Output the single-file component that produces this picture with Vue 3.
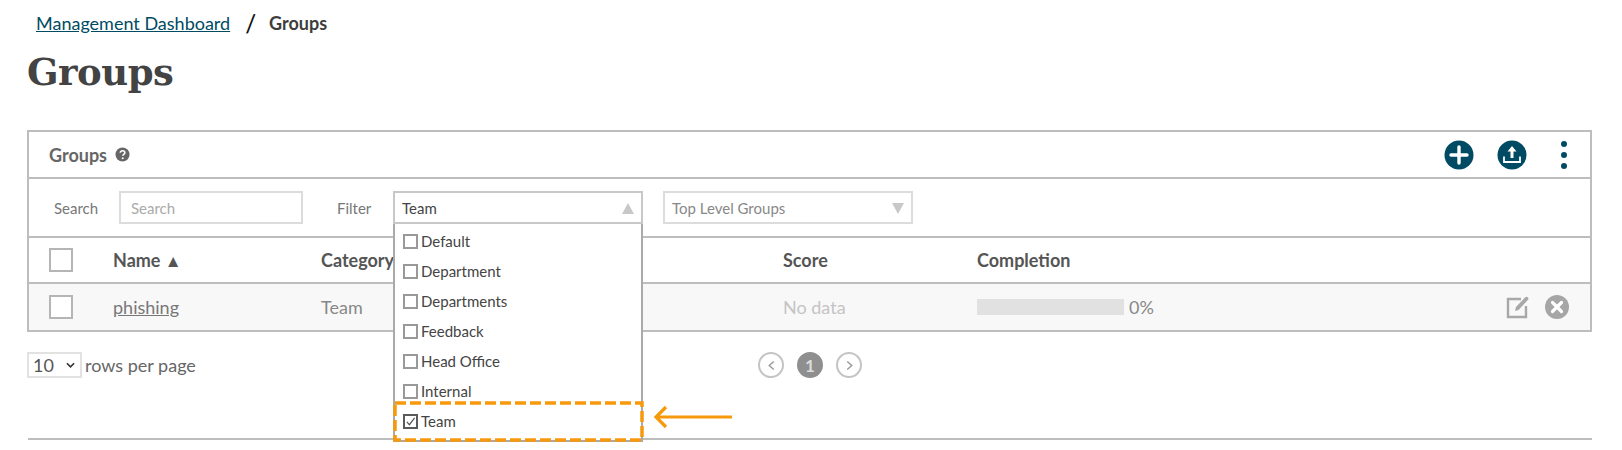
<script setup>
const options = [
  { label: 'Default', checked: false },
  { label: 'Department', checked: false },
  { label: 'Departments', checked: false },
  { label: 'Feedback', checked: false },
  { label: 'Head Office', checked: false },
  { label: 'Internal', checked: false },
  { label: 'Team', checked: true },
]
</script>

<template>
  <div class="page">
    <nav class="crumbs">
      <a class="crumb-link">Management Dashboard</a>
      <span class="crumb-sep">/</span>
      <strong class="crumb-current">Groups</strong>
    </nav>
    <h1 class="title">Groups</h1>

    <section class="panel">
      <header class="panel-head">
        <span class="panel-title">Groups</span>
        <svg class="help" viewBox="0 0 16 16" width="15" height="15">
          <circle cx="8" cy="8" r="7.5" fill="#666" />
          <path d="M5.6 6.2c0-1.4 1.1-2.2 2.5-2.2s2.4.8 2.4 2c0 1.9-2.2 1.8-2.2 3.4" fill="none" stroke="#fff" stroke-width="1.7" />
          <circle cx="8.2" cy="12" r="1.1" fill="#fff" />
        </svg>
        <div class="head-actions">
          <svg viewBox="0 0 30 30" width="30" height="30">
            <circle cx="15" cy="15" r="14.5" fill="#004b63" />
            <path d="M15 7v16M7 15h16" stroke="#fff" stroke-width="3.4" stroke-linecap="round" />
          </svg>
          <svg viewBox="0 0 30 30" width="30" height="30">
            <circle cx="15" cy="15" r="14.5" fill="#004b63" />
            <path d="M15 6l4.500 5.500h-3V18h-3v-6.500h-3z" fill="#fff" />
            <path d="M7 16.500V22h16v-5.500" fill="none" stroke="#fff" stroke-width="1.800" />
          </svg>
          <div class="dots"><i></i><i></i><i></i></div>
        </div>
      </header>

      <div class="filters">
        <label class="f-label search-label">Search</label>
        <div class="search-box">Search</div>
        <label class="f-label filter-label">Filter</label>
        <div class="select open">
          <span class="select-value">Team</span>
          <span class="tri up"></span>
          <ul class="dropdown">
            <li v-for="o in options" :key="o.label" class="option">
              <span class="opt-box" :class="{ on: o.checked }">
                <svg v-if="o.checked" viewBox="0 0 12 12" width="11" height="11">
                  <path d="M2 6.500l2.800 3L10.500 2" fill="none" stroke="#555" stroke-width="1.300" />
                </svg>
              </span>
              <span>{{ o.label }}</span>
            </li>
          </ul>
          <svg class="highlight" viewBox="0 0 251 41" width="251" height="41">
            <rect x="2" y="2" width="247" height="37" fill="none" stroke="#f7990c" stroke-width="3.500" stroke-dasharray="11 4" />
          </svg>
          <svg class="pointer" viewBox="0 0 80 24" width="80" height="24">
            <path d="M79 12H3M13 2L3 12l10 10" fill="none" stroke="#f7990c" stroke-width="3.200" />
          </svg>
        </div>
        <div class="select second">
          <span class="select-value muted">Top Level Groups</span>
          <span class="tri down"></span>
        </div>
      </div>

      <div class="row head-row">
        <div class="c-check"><span class="box"></span></div>
        <div class="c-name">Name <span class="sort">▲</span></div>
        <div class="c-cat">Category</div>
        <div class="c-score">Score</div>
        <div class="c-comp">Completion</div>
      </div>

      <div class="row data-row">
        <div class="c-check"><span class="box"></span></div>
        <div class="c-name"><a class="group-link">phishing</a></div>
        <div class="c-cat">Team</div>
        <div class="c-score nodata">No data</div>
        <div class="c-comp progress"><span class="bar"></span><span class="pct">0%</span></div>
        <div class="c-actions">
          <svg viewBox="0 0 26 26" width="26" height="26">
            <path d="M16 5H3v18h18V12" fill="none" stroke="#a8a8a8" stroke-width="2.400" />
            <path d="M10 17l1-4L20 3.500c1-1 2.200-1 3 0s.6 1.800-.2 2.600L13.500 16z" fill="#a8a8a8" />
          </svg>
          <svg viewBox="0 0 24 24" width="24" height="24">
            <circle cx="12" cy="12" r="12" fill="#a6a6a6" />
            <path d="M7.500 7.500l9 9M16.500 7.500l-9 9" stroke="#fff" stroke-width="3.200" stroke-linecap="round" />
          </svg>
        </div>
      </div>
    </section>

    <div class="foot">
      <div class="rows">
        <div class="rows-select">10
          <svg viewBox="0 0 10 6" width="9" height="6"><path d="M1 1l4 4 4-4" fill="none" stroke="#333" stroke-width="1.800" /></svg>
        </div>
        <span class="rows-text">rows per page</span>
      </div>
      <div class="pager">
        <span class="pg">
          <svg viewBox="0 0 10 12" width="9" height="11"><path d="M7.500 1.500L2.500 6l5 4.500" fill="none" stroke="#999" stroke-width="1.600" /></svg>
        </span>
        <span class="pg current">1</span>
        <span class="pg">
          <svg viewBox="0 0 10 12" width="9" height="11"><path d="M2.500 1.500L7.500 6l-5 4.500" fill="none" stroke="#999" stroke-width="1.600" /></svg>
        </span>
      </div>
    </div>

    <hr class="rule" />
  </div>
</template>

<style>
html, body { background: #fff; }
</style>

<style scoped>
.page {
  width: 1622px;
  height: 450px;
  box-sizing: border-box;
  padding: 0 30px 0 27px;
  overflow: hidden;
  font-family: Lato, "Open Sans", sans-serif;
  color: #444;
}
.crumbs {
  height: 24px;
  margin-top: 11px;
  padding-left: 9px;
  display: flex;
  align-items: center;
  font-size: 18px;
}
.crumb-link { color: #004b63; text-decoration: underline; }
.crumb-sep { color: #111; font-size: 24px; font-weight: 500; margin: 0 13px 0 15px; }
.crumb-current { color: #3d3d3d; font-weight: 700; font-size: 18px; }
.title {
  margin: 13px 0 0;
  height: 82px;
  font-family: "DejaVu Serif", serif;
  font-size: 37px;
  line-height: 48px;
  font-weight: 700;
  color: #434343;
  letter-spacing: -0.5px;
}
.panel {
  border: 2px solid #bdbdbd;
  position: relative;
}
.panel-head {
  height: 45px;
  box-sizing: content-box;
  display: flex;
  align-items: center;
  padding-left: 20px;
  border-bottom: 2px solid #bdbdbd;
}
.panel-title { font-size: 18px; font-weight: 700; color: #666; margin-right: 8px; }
.head-actions { margin-left: auto; display: flex; align-items: center; margin-right: 23px; }
.head-actions svg { margin-right: 23px; }
.dots { width: 6px; margin-left: 11px; display: flex; flex-direction: column; gap: 5px; }
.dots i { width: 6px; height: 6px; border-radius: 50%; background: #004b63; display: block; }
.filters {
  height: 57px;
  display: flex;
  align-items: center;
  border-bottom: 2px solid #bdbdbd;
  font-size: 15px;
}
.f-label { color: #777; }
.search-label { margin-left: 25px; width: 65px; }
.search-box {
  width: 184px;
  height: 33px;
  box-sizing: border-box;
  border: 2px solid #dcdcdc;
  padding-left: 10px;
  display: flex;
  align-items: center;
  color: #aaa;
}
.filter-label { margin-left: 34px; width: 56px; }
.select {
  width: 250px;
  height: 33px;
  box-sizing: border-box;
  border: 2px solid #c8c8c8;
  display: flex;
  align-items: center;
  padding-left: 7px;
  position: relative;
  background: #fff;
  font-size: 15px;
}
.select.second { margin-left: 20px; border-color: #dcdcdc; }
.select-value { color: #444; }
.select-value.muted { color: #888; }
.tri { position: absolute; right: 7px; top: 10px; width: 0; height: 0; border-left: 6px solid transparent; border-right: 6px solid transparent; }
.tri.up { border-bottom: 11px solid #c8c8c8; }
.tri.down { border-top: 11px solid #c8c8c8; }
.dropdown {
  position: absolute;
  left: -2px;
  top: 31px;
  width: 250px;
  box-sizing: border-box;
  height: 218px;
  margin: 0;
  padding: 2px 0 0 8px;
  list-style: none;
  background: #fff;
  border: 2px solid #aaa;
  border-top: none;
  z-index: 2;
  overflow: hidden;
}
.option { height: 30px; display: flex; align-items: center; gap: 3px; font-size: 15px; color: #444; }
.opt-box {
  width: 15px;
  height: 15px;
  box-sizing: border-box;
  border: 2px solid #999;
  background: #fff;
  display: flex;
  align-items: center;
  justify-content: center;
  flex: none;
}
.opt-box.on { border-color: #5a5a5a; }
.highlight { position: absolute; left: -2px; top: 208px; z-index: 3; }
.pointer { position: absolute; left: 258px; top: 212px; z-index: 3; }
.row { display: flex; align-items: center; height: 44px; position: relative; font-size: 18px; }
.head-row { font-weight: 700; color: #555; border-bottom: 2px solid #bdbdbd; }
.data-row { height: 46px; background: #f8f8f8; color: #888; }
.c-check { width: 84px; padding-left: 20px; box-sizing: border-box; display: flex; }
.box { width: 24px; height: 24px; box-sizing: border-box; border: 2px solid #b5b5b5; background: #fff; display: block; }
.c-name { width: 208px; }
.sort { font-size: 17px; }
.c-cat { width: 462px; }
.c-score { width: 194px; }
.nodata { color: #c4c4c4; }
.group-link { text-decoration: underline; color: #777; }
.progress { display: flex; align-items: center; }
.bar { width: 147px; height: 16px; background: #e1e1e1; display: block; margin-right: 5px; }
.pct { color: #888; }
.c-actions { margin-left: auto; display: flex; align-items: center; gap: 14px; margin-right: 21px; }
.foot { position: relative; display: flex; align-items: center; height: 26px; margin-top: 20px; }
.rows { display: flex; align-items: center; gap: 3px; }
.rows-select {
  width: 55px;
  height: 26px;
  box-sizing: border-box;
  border: 2px solid #e2e2e2;
  padding: 0 5px 0 4px;
  display: flex;
  align-items: center;
  justify-content: space-between;
  font-size: 18px;
  color: #555;
}
.rows-text { color: #666; font-size: 18px; }
.pager { position: absolute; left: 731px; display: flex; gap: 13px; }
.pg {
  width: 26px;
  height: 26px;
  box-sizing: border-box;
  border: 2px solid #c4c4c4;
  border-radius: 50%;
  display: flex;
  align-items: center;
  justify-content: center;
}
.pg.current { background: #8f8f8f; border-color: #8f8f8f; color: #ddd; font-weight: 700; font-size: 17px; }
.rule { margin: 60px 0 0 1px; border: 0; height: 2px; background: #bdbdbd; }
</style>
